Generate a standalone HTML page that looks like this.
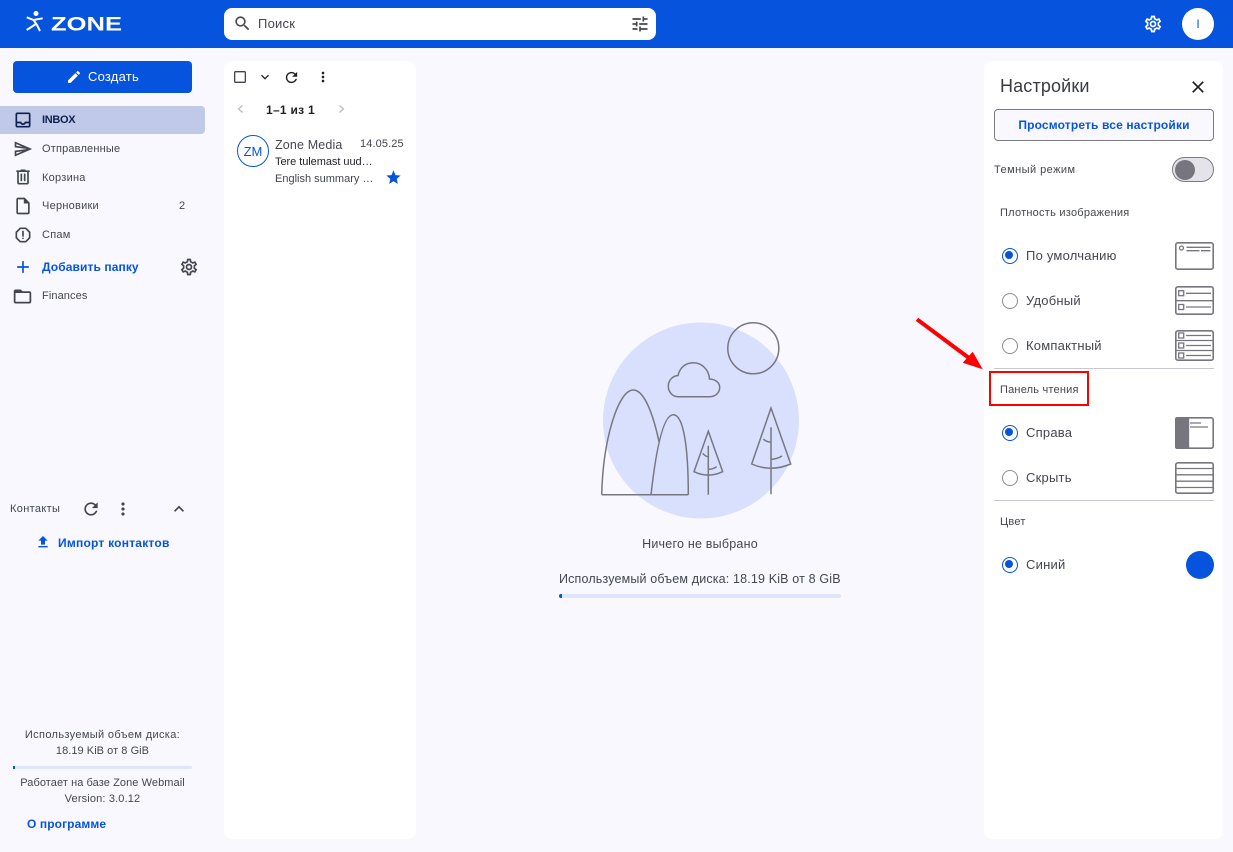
<!DOCTYPE html>
<html lang="ru"><head><meta charset="utf-8"><title>Zone Webmail</title>
<style>
html,body{margin:0;padding:0}
body{position:relative;width:1233px;height:852px;overflow:hidden;background:#f9f8ff;font-family:"Liberation Sans","Noto Sans CJK SC",sans-serif;color:#44464f}
.a{position:absolute}
.t{position:absolute;white-space:nowrap;line-height:16px}
.i{position:absolute;fill:#44464f}
.b{color:#0654de}
.radio{position:absolute;width:16px;height:16px;border-radius:50%;border:1.7px solid #8b8b92;box-sizing:border-box}
.radio.on{border-color:#0654de}
.radio.on:after{content:"";position:absolute;left:2.3px;top:2.3px;width:8px;height:8px;border-radius:50%;background:#0654de}
.s{font-size:13px;letter-spacing:.22px}
.n{font-size:11px;letter-spacing:.25px;margin-top:1px}
.hr{position:absolute;left:994px;width:220px;height:1px;background:#c7c6d2}
</style></head><body>
<div class="a" style="left:0;top:0;width:1233px;height:48px;background:#0654de"></div>

<!-- logo -->
<svg class="a" style="left:24px;top:9px" width="104" height="28" viewBox="24 9 104 28">
<circle cx="36" cy="13.500" r="2.500" fill="#fff"/>
<path d="M26.700 17.300L33.500 20L42.700 18.300M33.500 20L37 25L40 31M36 24L26.700 30" fill="none" stroke="#fff" stroke-width="2"/>
<text x="51" y="30.500" font-family="Liberation Sans" font-weight="700" font-size="19" fill="#fff" textLength="71" lengthAdjust="spacingAndGlyphs">ZONE</text>
</svg>

<!-- search -->
<div class="a" style="left:224px;top:8px;width:432px;height:32px;background:#fff;border-radius:8px"></div>
<svg class="i" style="left:233px;top:14px" width="19" height="19" viewBox="0 0 24 24"><path d="M15.500 14h-.79l-.28-.27C15.410 12.590 16 11.110 16 9.500 16 5.910 13.090 3 9.500 3S3 5.910 3 9.500 5.910 16 9.500 16c1.610 0 3.090-.59 4.230-1.570l.27.28v.79l5 4.990L20.490 19l-4.990-5zm-6 0C7.010 14 5 11.990 5 9.500S7.010 5 9.500 5 14 7.010 14 9.500 11.990 14 9.500 14z"/></svg>
<div class="t s" style="left:258px;top:16px">Поиск</div>
<svg class="i" style="left:630px;top:14px" width="20" height="20" viewBox="0 0 24 24"><path d="M3 17v2h6v-2H3zM3 5v2h10V5H3zm10 16v-2h8v-2h-8v-2h-2v6h2zM7 9v2H3v2h4v2h2V9H7zm14 4v-2H11v2h10zm-6-4h2V7h4V5h-4V3h-2v6z"/></svg>
<svg class="i" style="left:1143px;top:14px;fill:#fff" width="20" height="20" viewBox="0 0 24 24"><path id="g" d="M19.430 12.980c.04-.32.07-.64.07-.98s-.03-.66-.07-.98l2.110-1.650c.19-.15.24-.42.12-.64l-2-3.460c-.12-.22-.39-.3-.61-.22l-2.490 1c-.52-.4-1.080-.73-1.690-.98l-.38-2.650C14.460 2.180 14.250 2 14 2h-4c-.25 0-.46.18-.49.42l-.38 2.650c-.61.25-1.170.59-1.690.98l-2.490-1c-.23-.09-.49 0-.61.22l-2 3.460c-.13.22-.07.49.12.64l2.110 1.650c-.04.32-.07.65-.07.98s.03.66.07.98l-2.110 1.650c-.19.15-.24.42-.12.64l2 3.460c.12.22.39.3.61.22l2.490-1c.52.4 1.080.73 1.690.98l.38 2.650c.03.24.24.42.49.42h4c.25 0 .46-.18.49-.42l.38-2.650c.61-.25 1.170-.59 1.690-.98l2.490 1c.23.09.49 0 .61-.22l2-3.460c.12-.22.07-.49-.12-.64l-2.110-1.650zm-1.980-1.710c.04.31.05.52.05.73 0 .21-.02.43-.05.73l-.14 1.130.89.7 1.080.84-.7 1.210-1.270-.51-1.040-.42-.9.68c-.43.32-.84.56-1.250.73l-1.060.43-.16 1.130-.2 1.350h-1.400l-.19-1.350-.16-1.130-1.060-.43c-.43-.18-.83-.41-1.230-.71l-.91-.7-1.060.43-1.270.51-.7-1.210 1.080-.84.89-.7-.14-1.130c-.03-.31-.05-.54-.05-.74s.02-.43.05-.73l.14-1.130-.89-.7-1.080-.84.7-1.210 1.270.51 1.040.42.9-.68c.43-.32.84-.56 1.250-.73l1.060-.43.16-1.130.2-1.350h1.390l.19 1.350.16 1.130 1.060.43c.43.18.83.41 1.230.71l.91.7 1.060-.43 1.270-.51.7 1.210-1.070.85-.89.7.14 1.130zM12 8c-2.210 0-4 1.790-4 4s1.790 4 4 4 4-1.790 4-4-1.790-4-4-4zm0 6c-1.100 0-2-.9-2-2s.9-2 2-2 2 .9 2 2-.9 2-2 2z"/></svg>
<div class="a" style="left:1182px;top:8px;width:32px;height:32px;border-radius:50%;background:#fff"></div>
<div class="t b" style="left:1182px;top:16px;width:32px;text-align:center;font-size:12px">I</div>

<!-- create -->
<div class="a" style="left:13px;top:61px;width:179px;height:32px;border-radius:4px;background:#0654de"></div>
<svg class="i" style="left:66px;top:69px;fill:#fff" width="16" height="16" viewBox="0 0 24 24"><path d="M3 17.250V21h3.750L17.810 9.940l-3.750-3.750L3 17.250zM20.710 7.040c.39-.39.39-1.020 0-1.410l-2.340-2.340c-.39-.39-1.020-.39-1.410 0l-1.830 1.830 3.750 3.750 1.830-1.830z"/></svg>
<div class="t s" style="left:88px;top:69px;color:#fff">Создать</div>

<!-- nav -->
<div class="a" style="left:0;top:106px;width:205px;height:28px;background:#c0cae8;border-radius:0 4px 4px 0"></div>
<svg class="i" style="left:12.500px;top:110px;fill:#0f1f4f" width="20" height="20" viewBox="0 0 24 24"><path d="M19 3H5c-1.100 0-2 .9-2 2v14c0 1.100.9 2 2 2h14c1.100 0 2-.9 2-2V5c0-1.100-.9-2-2-2zm0 16H5v-3h3.560c.69 1.190 1.970 2 3.450 2s2.750-.81 3.450-2H19v3zm0-5h-4.990c0 1.100-.9 2-2 2s-2-.9-2-2H5V5h14v9z"/></svg>
<div class="t n" style="left:42px;top:111px;color:#0f1f4f;font-weight:700;letter-spacing:-.3px">INBOX</div>
<svg class="i" style="left:13px;top:138.500px" width="20" height="20" viewBox="0 0 24 24"><path d="M4.010 6.030l7.510 3.220-7.520-1 .01-2.220m7.500 8.720L4 17.970v-2.220l7.510-1M2.010 3L2 10l15 2-15 2 .01 7L23 12 2.010 3z"/></svg>
<div class="t n" style="left:42px;top:140px;letter-spacing:.18px">Отправленные</div>
<svg class="i" style="left:12.500px;top:167px" width="20" height="20" viewBox="0 0 24 24"><path d="M15 4V3H9v1H4v2h1v13c0 1.100.9 2 2 2h10c1.100 0 2-.9 2-2V6h1V4h-5zm2 15H7V6h10v13zM9 8h2v9H9zm4 0h2v9h-2z"/></svg>
<div class="t n" style="left:42px;top:169px">Корзина</div>
<svg class="i" style="left:12.500px;top:196px" width="20" height="20" viewBox="0 0 24 24"><path d="M14 2H6c-1.100 0-2 .9-2 2v16c0 1.100.9 2 2 2h12c1.100 0 2-.9 2-2V8l-6-6zM6 20V4h7v5h5v11H6z"/></svg>
<div class="t n" style="left:42px;top:197px">Черновики</div>
<div class="t n" style="left:179px;top:197px">2</div>
<svg class="i" style="left:12.500px;top:224.500px" width="20" height="20" viewBox="0 0 24 24"><path d="M15.730 3H8.270L3 8.270v7.460L8.270 21h7.460L21 15.730V8.270L15.730 3zM19 14.900L14.900 19H9.100L5 14.900V9.100L9.100 5h5.800L19 9.100v5.800z"/><circle cx="12" cy="16" r="1"/><path d="M11 7h2v7h-2z"/></svg>
<div class="t n" style="left:42px;top:226px">Спам</div>
<svg class="i" style="left:12.500px;top:257px;fill:#0654de" width="20" height="20" viewBox="0 0 24 24"><path d="M19 13h-6v6h-2v-6H5v-2h6V5h2v6h6v2z"/></svg>
<div class="t b" style="left:42px;top:259px;font-size:12px;font-weight:700;letter-spacing:.1px">Добавить папку</div>
<svg class="i" style="left:179px;top:257px" width="20" height="20" viewBox="0 0 24 24"><use href="#g"/></svg>
<svg class="i" style="left:12px;top:285.500px" width="21" height="21" viewBox="0 0 24 24"><path d="M20 6h-8l-2-2H4c-1.100 0-1.990.9-1.990 2L2 18c0 1.100.9 2 2 2h16c1.100 0 2-.9 2-2V8c0-1.100-.9-2-2-2zm0 12H4V8h16v10z"/></svg>
<div class="t n" style="left:42px;top:287px;letter-spacing:.1px">Finances</div>

<!-- contacts -->
<div class="t n" style="left:10px;top:500px;letter-spacing:.35px">Контакты</div>
<svg class="i" style="left:80.500px;top:498.500px" width="20" height="20" viewBox="0 0 24 24"><path d="M17.650 6.350C16.200 4.900 14.210 4 12 4c-4.420 0-7.990 3.580-7.990 8s3.570 8 7.990 8c3.730 0 6.840-2.550 7.730-6h-2.080c-.82 2.330-3.040 4-5.650 4-3.310 0-6-2.690-6-6s2.690-6 6-6c1.660 0 3.140.69 4.220 1.780L13 11h7V4l-2.350 2.350z"/></svg>
<svg class="i" style="left:113px;top:499px" width="20" height="20" viewBox="0 0 24 24"><path d="M12 8c1.100 0 2-.9 2-2s-.9-2-2-2-2 .9-2 2 .9 2 2 2zm0 2c-1.100 0-2 .9-2 2s.9 2 2 2 2-.9 2-2-.9-2-2-2zm0 6c-1.100 0-2 .9-2 2s.9 2 2 2 2-.9 2-2-.9-2-2-2z"/></svg>
<svg class="i" style="left:169px;top:499px" width="20" height="20" viewBox="0 0 24 24"><path d="M12 8l-6 6 1.410 1.410L12 10.830l4.590 4.580L18 14z"/></svg>
<svg class="i" style="left:35px;top:534px;fill:#0654de" width="16" height="16" viewBox="0 0 24 24"><path d="M9 16h6v-6h4l-7-7-7 7h4zm-4 2h14v2H5z"/></svg>
<div class="t b" style="left:58px;top:535px;font-size:12px;font-weight:700;letter-spacing:.23px">Импорт контактов</div>

<!-- sidebar footer -->
<div class="t n" style="left:13px;width:179px;top:726px;text-align:center;letter-spacing:.35px">Используемый объем диска:</div>
<div class="t n" style="left:13px;width:179px;top:742px;text-align:center;letter-spacing:.05px">18.19 KiB от 8 GiB</div>
<div class="a" style="left:13px;top:766px;width:179px;height:3px;background:#dfe5fb;border-radius:2px"></div>
<div class="a" style="left:13px;top:766px;width:2px;height:3px;background:#0654de"></div>
<div class="t n" style="left:13px;width:179px;top:774px;text-align:center;letter-spacing:.08px">Работает на базе Zone Webmail</div>
<div class="t n" style="left:13px;width:179px;top:790px;text-align:center;letter-spacing:.15px">Version: 3.0.12</div>
<div class="t b" style="left:27px;top:816px;font-size:12px;font-weight:700;letter-spacing:.1px">О программе</div>

<!-- list panel -->
<div class="a" style="left:224px;top:61px;width:192px;height:778px;background:#fff;border-radius:8px"></div>
<svg class="i" style="left:232px;top:69px" width="16" height="16" viewBox="0 0 24 24"><path d="M19 5v14H5V5h14m0-2H5c-1.100 0-2 .9-2 2v14c0 1.100.9 2 2 2h14c1.100 0 2-.9 2-2V5c0-1.100-.9-2-2-2z"/></svg>
<svg class="i" style="left:257px;top:69px;fill:#1f2024" width="16" height="16" viewBox="0 0 24 24"><path d="M16.590 8.590L12 13.170 7.410 8.590 6 10l6 6 6-6z"/></svg>
<svg class="i" style="left:283px;top:68.500px;fill:#1f2024" width="17" height="17" viewBox="0 0 24 24"><path d="M17.650 6.350C16.200 4.900 14.210 4 12 4c-4.420 0-7.990 3.580-7.990 8s3.570 8 7.990 8c3.730 0 6.840-2.550 7.730-6h-2.080c-.82 2.330-3.040 4-5.650 4-3.310 0-6-2.690-6-6s2.690-6 6-6c1.660 0 3.140.69 4.220 1.780L13 11h7V4l-2.350 2.350z"/></svg>
<svg class="i" style="left:315px;top:69px;fill:#1f2024" width="16" height="16" viewBox="0 0 24 24"><path d="M12 8c1.100 0 2-.9 2-2s-.9-2-2-2-2 .9-2 2 .9 2 2 2zm0 2c-1.100 0-2 .9-2 2s.9 2 2 2 2-.9 2-2-.9-2-2-2zm0 6c-1.100 0-2 .9-2 2s.9 2 2 2 2-.9 2-2-.9-2-2-2z"/></svg>
<svg class="a" style="left:232px;top:101px" width="16" height="16" viewBox="0 0 16 16"><path d="M10.500 4.500L6.500 8l4 3.500" fill="none" stroke="#bcbcc2" stroke-width="1.300"/></svg>
<svg class="a" style="left:333px;top:101px" width="16" height="16" viewBox="0 0 16 16"><path d="M6.500 4.500L10.500 8l-4 3.500" fill="none" stroke="#bcbcc2" stroke-width="1.300"/></svg>
<div class="t" style="left:266px;top:102px;font-size:12px;font-weight:700;color:#1f2024;letter-spacing:.28px">1–1 из 1</div>
<div class="a" style="left:237px;top:135px;width:32px;height:32px;border:1px solid #0654de;border-radius:50%;box-sizing:border-box"></div>
<div class="t b" style="left:237px;top:144px;width:32px;text-align:center;font-size:13px">ZM</div>
<div class="t" style="left:275px;top:137px;font-size:12.500px;letter-spacing:.15px">Zone Media</div>
<div class="t n" style="left:360px;top:135px;letter-spacing:.12px">14.05.25</div>
<div class="t n" style="left:275px;top:153px;color:#1f2024;letter-spacing:-.05px">Tere tulemast uud…</div>
<div class="t n" style="left:275px;top:170px;letter-spacing:0">English summary …</div>
<svg class="i" style="left:385px;top:169px;fill:#0654de" width="17" height="17" viewBox="0 0 24 24"><path d="M12 17.270L18.180 21l-1.640-7.030L22 9.240l-7.190-.61L12 2 9.190 8.630 2 9.240l5.460 4.730L5.820 21z"/></svg>

<!-- illustration -->
<svg class="a" style="left:590px;top:315px" width="220" height="210" viewBox="590 315 220 210" fill="none" stroke="#77777f" stroke-width="1.500">
<circle cx="701" cy="420.500" r="98" fill="#d9e0fe" stroke="none"/>
<circle cx="753.300" cy="348.300" r="25.500"/>
<path d="M678 396.700H710C716 396.700 719.700 392 719.700 387.500C719.700 383 716 379.300 709.500 379C709 370 702 362.700 693.500 362.700C686 362.700 680 367 678 375.500C672 376 668.300 381 668.300 386C668.300 392 672.500 396.700 678 396.700Z"/>
<path d="M601.700 494.700H688.300M601.700 494.700C603 440 618 390 633.300 390C645 390 654 418 659 441.700M651 494.700C656 450 663 414.700 673.300 414.700C684 414.700 688.300 450 688.300 494.700"/>
<path d="M708.300 431.300L694 471.700Q708.300 478.500 722.700 471.700ZM708.300 445.700V494.700M702.700 453.300Q705 456 707.500 456.700M709 469.300Q713 469 716.700 466.700"/>
<path d="M771 408L751.700 464Q771 472.500 790.700 464ZM771 427.300V494.300M763.300 439Q766 441.700 770.700 442.300M771.700 459.300Q777 459 782 456"/>
</svg>
<div class="t s" style="left:500px;width:400px;top:536px;text-align:center;font-size:12.500px">Ничего не выбрано</div>
<div class="t s" style="left:559px;top:571px;font-size:12.500px;letter-spacing:.16px">Используемый объем диска: 18.19 KiB от 8 GiB</div>
<div class="a" style="left:559px;top:594px;width:282px;height:4px;background:#dfe5fb;border-radius:2px"></div>
<div class="a" style="left:559px;top:594px;width:3px;height:4px;background:#0654de;border-radius:2px 0 0 2px"></div>

<!-- settings -->
<div class="a" style="left:984px;top:61px;width:239px;height:778px;background:#fff;border-radius:8px"></div>
<div class="t" style="left:1000px;top:76px;line-height:20px;font-size:18px;letter-spacing:.15px;color:#3a3b42">Настройки</div>
<svg class="i" style="left:1188px;top:77px;fill:#1f2024" width="20" height="20" viewBox="0 0 24 24"><path d="M19 6.410L17.590 5 12 10.590 6.410 5 5 6.410 10.590 12 5 17.590 6.410 19 12 13.410 17.590 19 19 17.590 13.410 12z"/></svg>
<div class="a" style="left:994px;top:109px;width:220px;height:32px;border:1px solid #7a7a82;border-radius:4px;box-sizing:border-box;background:#f9f8ff"></div>
<div class="t b" style="left:994px;width:220px;top:117px;text-align:center;font-size:12px;font-weight:700;letter-spacing:.15px">Просмотреть все настройки</div>
<div class="t n" style="left:994px;top:161px;letter-spacing:.45px">Темный режим</div>
<div class="a" style="left:1172px;top:157px;width:42px;height:25px;border-radius:13px;background:#e4e3ea;border:1px solid #7a7a82;box-sizing:border-box"></div>
<div class="a" style="left:1175px;top:160px;width:20px;height:20px;border-radius:50%;background:#77767f"></div>
<div class="t n" style="left:1000px;top:204px">Плотность изображения</div>

<div class="radio on" style="left:1002px;top:248px"></div>
<div class="t s" style="left:1026px;top:248px">По умолчанию</div>
<div class="radio" style="left:1002px;top:293px"></div>
<div class="t s" style="left:1026px;top:293px">Удобный</div>
<div class="radio" style="left:1002px;top:338px"></div>
<div class="t s" style="left:1026px;top:338px">Компактный</div>

<svg class="a" style="left:1175px;top:242px" width="39" height="28" viewBox="0 0 39 28" fill="none" stroke="#77767f" stroke-width="1.300"><rect x=".8" y=".8" width="37.400" height="26.400" rx="2" stroke-width="1.600"/><circle cx="6.500" cy="6" r="2"/><path d="M11.500 5.300h24M11.500 8.700h13M26 8.700h9.500"/></svg>
<svg class="a" style="left:1175px;top:286px" width="39" height="29" viewBox="0 0 39 29" fill="none" stroke="#77767f" stroke-width="1.300"><rect x=".8" y=".8" width="37.400" height="27.400" rx="2" stroke-width="1.600"/><path d="M1 14.700h37M11 7.300h25M11 21h25"/><rect x="3.700" y="4.700" width="5" height="5"/><rect x="3.700" y="18.500" width="5" height="5"/></svg>
<svg class="a" style="left:1175px;top:330px" width="39" height="31" viewBox="0 0 39 31" fill="none" stroke="#77767f" stroke-width="1.300"><rect x=".8" y=".8" width="37.400" height="29.400" rx="2" stroke-width="1.600"/><path d="M1 10.500h37M1 20.500h37M11 5.500h25M11 15.500h25M11 25.500h25"/><rect x="3.700" y="3" width="5" height="5"/><rect x="3.700" y="13" width="5" height="5"/><rect x="3.700" y="23" width="5" height="5"/></svg>

<div class="hr" style="top:368px"></div>
<div class="t n" style="left:1000px;top:381px;letter-spacing:.2px">Панель чтения</div>

<div class="radio on" style="left:1002px;top:425px"></div>
<div class="t s" style="left:1026px;top:425px">Справа</div>
<div class="radio" style="left:1002px;top:470px"></div>
<div class="t s" style="left:1026px;top:470px">Скрыть</div>
<svg class="a" style="left:1175px;top:417px" width="39" height="32" viewBox="0 0 39 32" fill="none" stroke="#77767f" stroke-width="1.300"><path d="M2.500.5h11v31h-11a2 2 0 0 1-2-2V2.500a2 2 0 0 1 2-2z" fill="#77767f"/><rect x=".8" y=".8" width="37.400" height="30.400" rx="2" stroke-width="1.600"/><path d="M15 6h11M15 10h18"/></svg>
<svg class="a" style="left:1175px;top:462px" width="39" height="32" viewBox="0 0 39 32" fill="none" stroke="#77767f" stroke-width="1.300"><rect x=".8" y=".8" width="37.400" height="30.400" rx="2" stroke-width="1.600"/><path d="M1 6.500h37M1 12.800h37M1 19.200h37M1 25.500h37"/></svg>
<div class="hr" style="top:500px"></div>
<div class="t n" style="left:1000px;top:513px">Цвет</div>
<div class="radio on" style="left:1002px;top:557px"></div>
<div class="t s" style="left:1026px;top:557px">Синий</div>
<div class="a" style="left:1186px;top:551px;width:28px;height:28px;border-radius:50%;background:#0654de"></div>

<!-- annotation -->
<div class="a" style="left:989px;top:371px;width:100px;height:35px;border:2px solid #f00;box-sizing:border-box"></div>
<svg class="a" style="left:910px;top:312px" width="80" height="64" viewBox="910 312 80 64"><path d="M917 319.300L969 358" stroke="#f00" stroke-width="4"/><path d="M982.700 369.300L962.700 362.700L972.700 351.700Z" fill="#f00"/></svg>
</body></html>
